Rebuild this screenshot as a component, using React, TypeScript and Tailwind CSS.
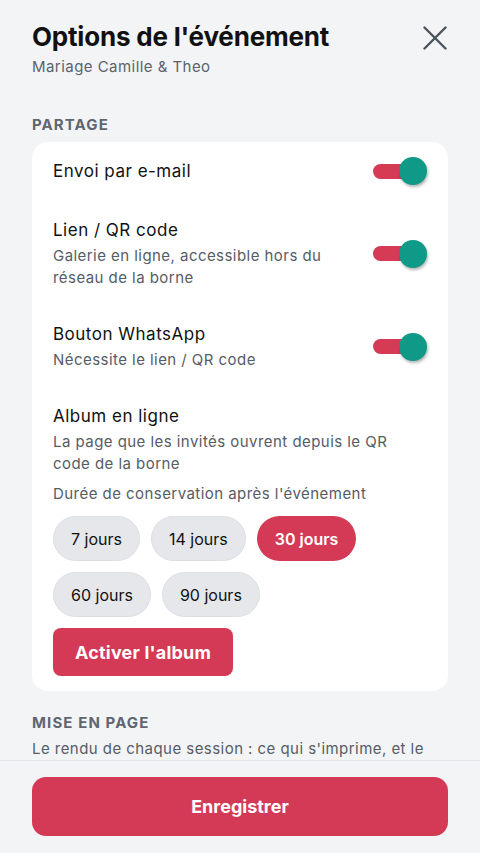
const font = { fontFamily: "Inter, 'Noto Sans', sans-serif" };

function Toggle() {
  return (
    <div className="relative w-[54px] h-7 shrink-0 flex items-center">
      <div className="w-[42px] h-[15px] rounded-full bg-[#d63b56]" />
      <div className="absolute right-0 top-0 w-7 h-7 rounded-full bg-[#0e9a86] shadow-[1px_2px_3px_rgba(0,0,0,0.3)]" />
    </div>
  );
}

interface RowProps {
  title: string;
  desc?: string;
}

function ToggleRow({ title, desc }: RowProps) {
  return (
    <div className="flex items-center justify-between gap-4">
      <div className="flex-1 pr-6">
        <div className="text-[17px] leading-6 tracking-[0.5px] text-[#111]">{title}</div>
        {desc && (
          <div className="mt-[3px] text-[15px] leading-[22px] tracking-[0.45px] text-[#555c66]">{desc}</div>
        )}
      </div>
      <Toggle />
    </div>
  );
}

function Pill({ label, active = false }: { label: string; active?: boolean }) {
  return (
    <button
      className={`h-[45px] rounded-full text-[16px] ${
        active
          ? "bg-[#d43a55] text-white font-semibold px-[18px]"
          : "bg-[#e5e7eb] border border-[#dcdfe3] text-[#111] px-[17px]"
      }`}
    >
      {label}
    </button>
  );
}

export default function App() {
  return (
    <div className="h-[853px] w-[480px] flex flex-col bg-[#f3f4f6]" style={font}>
      <div className="flex-1 overflow-hidden px-8">
        {/* Header */}
        <div className="pt-[21px] flex items-start justify-between">
          <div>
            <h1 className="text-[26px] leading-8 font-bold text-[#111] tracking-[-0.2px]">
              Options de l'événement
            </h1>
            <div className="mt-[3px] text-[15px] leading-[22px] tracking-[0.45px] text-[#5b626c]">
              Mariage Camille & Theo
            </div>
          </div>
          <button className="mt-[5px] mr-[1px] text-[#4b535d]" aria-label="Fermer">
            <svg width="24" height="24" viewBox="0 0 24 24" fill="none" stroke="currentColor" strokeWidth="2.4" strokeLinecap="round">
              <path d="M1.5 1.5 22.5 22.5M22.5 1.5 1.5 22.5" />
            </svg>
          </button>
        </div>

        <div className="mt-[37px] text-[15px] leading-5 font-bold tracking-[1.1px] text-[#5f6670]">PARTAGE</div>

        {/* Card */}
        <div className="mt-[7px] bg-white rounded-2xl px-[21px] pt-[15px] pb-[15px]">
          <div className="flex flex-col gap-[33px]">
            <ToggleRow title="Envoi par e-mail" />
            <ToggleRow title="Lien / QR code" desc="Galerie en ligne, accessible hors du réseau de la borne" />
            <ToggleRow title="Bouton WhatsApp" desc="Nécessite le lien / QR code" />
            <div>
              <div className="text-[17px] leading-6 tracking-[0.5px] text-[#111]">Album en ligne</div>
              <div className="mt-[3px] text-[15px] leading-[22px] tracking-[0.45px] text-[#555c66] pr-6">
                La page que les invités ouvrent depuis le QR code de la borne
              </div>
              <div className="mt-[8px] text-[15px] leading-[22px] tracking-[0.45px] text-[#555c66]">
                Durée de conservation après l'événement
              </div>
              <div className="mt-[11px] flex flex-wrap gap-[11px]">
                <Pill label="7 jours" />
                <Pill label="14 jours" />
                <Pill label="30 jours" active />
                <Pill label="60 jours" />
                <Pill label="90 jours" />
              </div>
              <button className="mt-[11px] h-12 px-[22px] rounded-lg bg-[#d43a55] text-white text-[18px] tracking-[0.2px] font-bold">
                Activer l'album
              </button>
            </div>
          </div>
        </div>

        <div className="mt-[22px] text-[15px] leading-5 font-bold tracking-[1.1px] text-[#5f6670]">MISE EN PAGE</div>
        <div className="mt-[5px] text-[15px] leading-[22px] tracking-[0.45px] text-[#555c66]">
          Le rendu de chaque session : ce qui s'imprime, et le format des photos partagées en ligne.
        </div>
      </div>

      {/* Footer */}
      <div className="border-t border-[#e3e5e8] px-8 pt-4 pb-[17px] bg-[#f3f4f6]">
        <button className="w-full h-[59px] rounded-[14px] bg-[#d43a55] text-white text-[18px] font-bold">
          Enregistrer
        </button>
      </div>
    </div>
  );
}
